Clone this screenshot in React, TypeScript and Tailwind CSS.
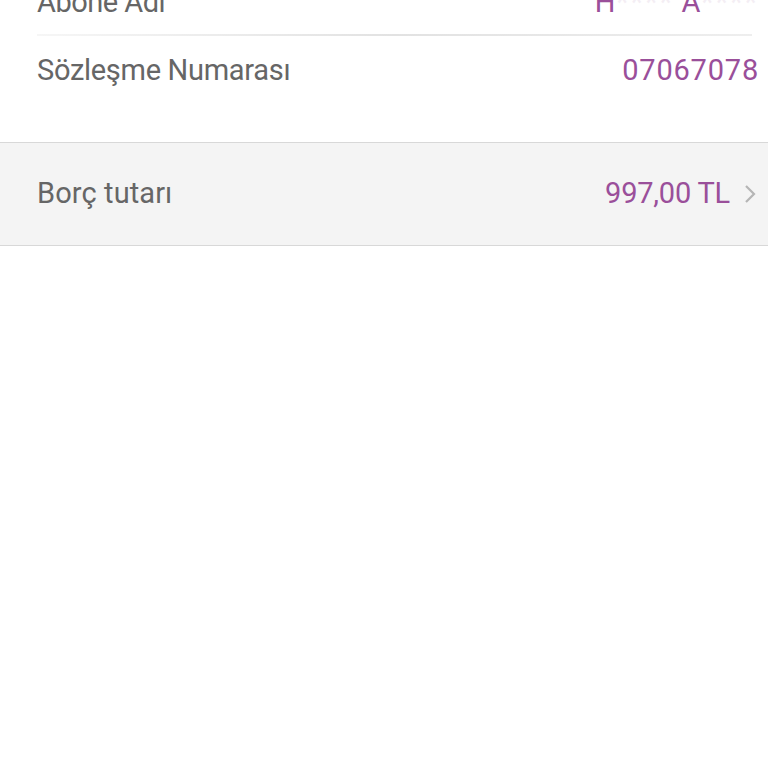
import React from "react";

export default function App() {
  return (
    <div className="w-[768px] h-[768px] overflow-hidden bg-white" style={{ fontFamily: "Roboto, 'Noto Sans', sans-serif" }}>
      <div className="-mt-[36px] flex flex-col">
        <div className="flex h-[70px] items-center justify-between pl-[37px] pr-[9px] pt-[8px]">
          <span className="text-[29px] tracking-[-0.5px] text-[#666666]">Abone Adı</span>
          <span className="text-[29px] tracking-[0.5px] text-[#9a4f9a]">
            H<span className="tracking-[2px] text-[#f4eef4]">****</span> A<span className="tracking-[2px] text-[#f4eef4]">****</span>
          </span>
        </div>
        <div className="ml-[37px] mr-[16px] h-[2px] bg-gradient-to-r from-[#f6f6f6] via-[#e2e2e2] to-[#eeeeee]" />
        <div className="flex h-[70px] items-center justify-between pl-[37px] pr-[9px]">
          <span className="text-[29px] tracking-[-0.3px] text-[#666666]">Sözleşme Numarası</span>
          <span className="text-[29px] tracking-[0.8px] text-[#9a4f9a]">07067078</span>
        </div>
        <div className="h-[36px]" />
        <div className="flex h-[104px] items-center justify-between border-y border-[#d8d8d8] bg-[#f4f4f4] pl-[37px] pr-[12px]">
          <span className="text-[29px] tracking-[0.1px] text-[#666666]">Borç tutarı</span>
          <div className="flex items-center gap-[14px]">
            <span className="text-[29px] tracking-[-0.2px] text-[#9a4f9a]">997,00 TL</span>
            <svg width="12" height="20" viewBox="0 0 12 20" fill="none">
              <path d="M2 2 L10 10 L2 18" stroke="#b5b5b5" strokeWidth="2.2" />
            </svg>
          </div>
        </div>
      </div>
    </div>
  );
}
